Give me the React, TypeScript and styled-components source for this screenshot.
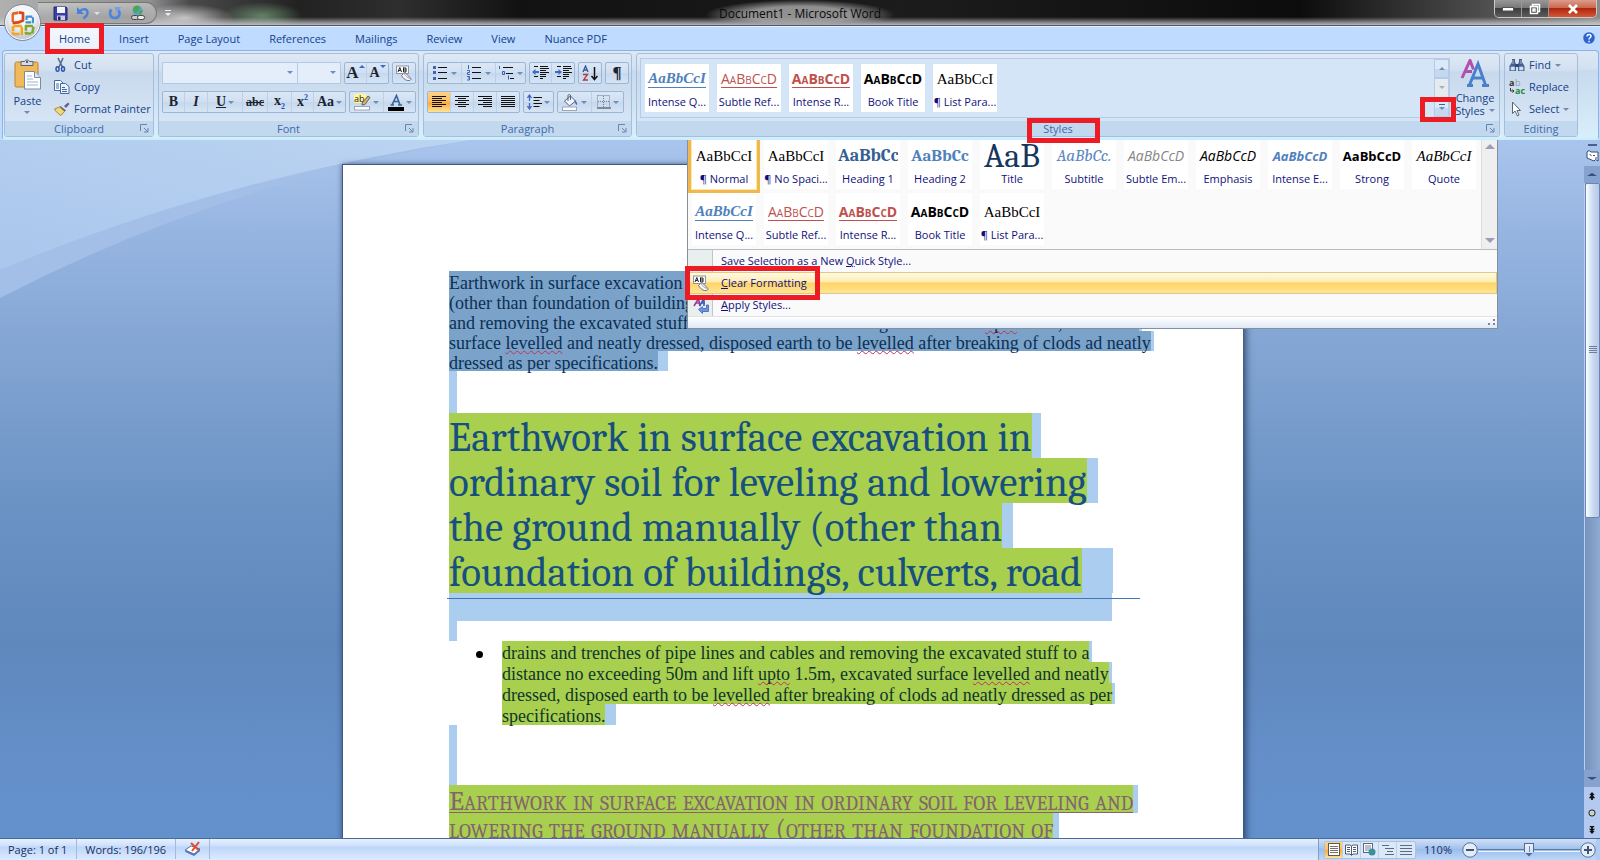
import React from "react";
import styled, { createGlobalStyle, css } from "styled-components";

const UI = `"Open Sans", "Noto Sans", sans-serif`;
const BODY = `"Liberation Serif", "Times New Roman", serif`;
const HEAD = `Caladea, Cambria, "Liberation Serif", serif`;

const Global = createGlobalStyle`
  *, *::before, *::after { box-sizing: border-box; }
  body { margin: 0; font: 11px/16px ${UI}; color: #15428b; }
  button, select, input { font: inherit; color: inherit; margin: 0; padding: 0; }
  button { background: none; border: 0; cursor: pointer; }
  h1, h2, p, ul { margin: 0; padding: 0; font-weight: normal; }
`;

const Window = styled.div`
  display: flex;
  flex-direction: column;
  height: 100vh;
  min-width: 1280px;
  overflow: hidden;
  background: #bfdbff;
`;

/* ---------- title bar ---------- */

const TitleBar = styled.header`
  position: relative;
  display: grid;
  grid-template-columns: 1fr auto 1fr;
  flex: none;
  height: 26px;
  border-bottom: 1px solid #4d5a6b;
  background:
    linear-gradient(180deg, transparent 17px, rgba(210, 210, 210, 0.85) 25px),
    radial-gradient(ellipse 50px 14px at 185px 18px, rgba(225, 225, 225, 0.8), transparent),
    radial-gradient(ellipse 40px 14px at 262px 16px, rgba(120, 165, 125, 0.7), transparent),
    linear-gradient(90deg, #b0b0b0 0, #8f8f8f 150px, #4a4a4a 190px, #222 300px, #2e2e2e 400px, #121212 520px, #1c1c1c 900px, #0c0c0c 1300px, #555 94%, #8a8a8a 100%);
`;

const QuickBar = styled.div`
  display: flex;
  align-items: center;
  align-self: start;
  justify-self: start;
  gap: 8px;
  height: 22px;
  margin: 2px 0 0 38px;
  padding: 0 10px 0 15px;
  border: 1px solid #777;
  border-left: 0;
  border-radius: 0 11px 11px 0;
  background: linear-gradient(180deg, rgba(215, 215, 215, 0.6), rgba(150, 150, 150, 0.5));
`;

const QuickSlot = styled.div`
  display: flex;
  align-items: center;
  gap: 8px;
`;

const IconButton = styled.button`
  display: flex;
  align-items: center;
  justify-content: center;
  gap: 4px;
`;

const QuickMore = styled(IconButton)`
  flex-direction: column;
  gap: 2px;
`;

const Orb = styled.button`
  position: absolute;
  z-index: 5;
  left: 4px;
  top: 4px;
  width: 37px;
  height: 37px;
  display: flex;
  align-items: center;
  justify-content: center;
  border-radius: 50%;
  border: 1px solid #7d8896;
  background: radial-gradient(circle at 50% 30%, #fff 0, #eceff3 45%, #c3c9d2 75%, #eef2f7 100%);
  box-shadow: inset 0 0 0 1px #f7f9fc;
`;

const DocTitle = styled.div`
  padding: 5px 12px 0;
  font-size: 12px;
  line-height: 18px;
  color: #0a0a0a;
  background: radial-gradient(ellipse at 50% 60%, rgba(165, 165, 165, 0.85) 40%, transparent 72%);
`;

const WindowButtons = styled.div`
  display: flex;
  justify-self: end;
  height: 18px;
  margin-right: 3px;
  border: 1px solid #c9c9c9;
  border-top: 0;
  border-radius: 0 0 5px 5px;
  overflow: hidden;
`;

const WindowButton = styled.button<{ $close?: boolean }>`
  display: flex;
  align-items: center;
  justify-content: center;
  width: ${(p) => (p.$close ? 47 : 27)}px;
  border-right: ${(p) => (p.$close ? 0 : 1)}px solid #999;
  background: ${(p) =>
    p.$close
      ? "linear-gradient(180deg, #dd9c8a 0, #c96a52 45%, #b0270d 50%, #d2583a 100%)"
      : "linear-gradient(180deg, #989898 0, #787878 45%, #3c3c3c 50%, #5d5d5d 100%)"};
`;

/* ---------- tabs ---------- */

const Callout = styled.span<{ $inset: string }>`
  position: absolute;
  z-index: 20;
  inset: ${(p) => p.$inset};
  border: 5px solid #ed1c24;
  pointer-events: none;
`;

const TabBar = styled.nav`
  display: flex;
  align-items: stretch;
  flex: none;
  gap: 1px;
  height: 24px;
  padding-left: 45px;
  border-top: 1px solid #e3efff;
`;

const Tab = styled.button<{ $active?: boolean }>`
  position: relative;
  padding: 0 14px;
  color: #15428b;
  ${(p) => p.$active && css`background: linear-gradient(180deg, #f4f8fd, #eaf0fa);`}
`;

const Help = styled(IconButton)`
  margin-left: auto;
  padding: 0 4px 2px 0;
`;

/* ---------- ribbon ---------- */

const Ribbon = styled.section`
  position: relative;
  z-index: 2;
  display: flex;
  flex: none;
  gap: 4px;
  height: 90px;
  margin: 0 1px 0 2px;
  padding: 2px 20px 1px 1px;
  border: 1px solid #8db2e3;
  border-bottom: 2px solid #c8f0fc;
  border-radius: 4px;
  background: linear-gradient(180deg, #dde8f5 0, #d2e0f1 18px, #c8daee 20px, #d9eefb 100%);
`;

const Group = styled.div<{ $width?: number }>`
  position: relative;
  display: flex;
  flex-direction: column;
  ${(p) => (p.$width ? `flex: none; width: ${p.$width}px;` : "flex: 1; min-width: 0;")}
  border: 1px solid #a4bfdd;
  border-radius: 3px;
  background: linear-gradient(180deg, #dfe9f5 0, #d3e0f0 16px, #c8d9ed 18px, #dae9f7 100%);
`;

const GroupBody = styled.div`
  display: flex;
  flex: 1;
  min-height: 0;
`;

const GroupName = styled.div<{ $shift?: boolean }>`
  position: relative;
  display: flex;
  justify-content: center;
  flex: none;
  height: 15px;
  line-height: 16px;
  padding-right: ${(p) => (p.$shift ? 20 : 0)}px;
  color: #3e6aaa;
  background: #c2d8ef;
`;

const Launcher = styled.button`
  position: absolute;
  right: 4px;
  top: 3px;
  display: flex;
`;

const Arrow = styled.i<{ $up?: boolean; $color?: string }>`
  width: 0;
  height: 0;
  border: 3px solid transparent;
  ${(p) =>
    p.$up
      ? css`border-top: 0; border-bottom-color: ${p.$color || "#6f8db5"};`
      : css`border-bottom: 0; border-top-color: ${p.$color || "#6f8db5"};`}
`;

const BigButton = styled.button<{ $width: number }>`
  display: flex;
  flex-direction: column;
  align-items: center;
  flex: none;
  width: ${(p) => p.$width}px;
  padding-top: 5px;
  line-height: 13px;
  gap: 4px;
`;

const BigLabel = styled.span`
  display: flex;
  flex-direction: column;
  align-items: center;
  gap: 4px;
`;

const InlineLabel = styled.span`
  display: flex;
  align-items: center;
  gap: 4px;
`;

const CommandList = styled.div`
  display: flex;
  flex-direction: column;
  padding-left: 4px;
`;

const Command = styled.button`
  display: grid;
  grid-template-columns: 16px auto auto;
  align-items: center;
  justify-content: start;
  column-gap: 4px;
  height: 22px;
  white-space: nowrap;
`;

const ToolRows = styled.div`
  display: flex;
  flex-direction: column;
  gap: 7px;
  padding: 8px 3px 0;
`;

const ToolRow = styled.div`
  display: flex;
  gap: 3px;
`;

const ToolSet = styled.div`
  display: flex;
  height: 22px;
  border: 1px solid #9ab6d8;
  border-radius: 2px;
  background: linear-gradient(180deg, #dbe7f5 0, #cfdff1 50%, #c6d8ed 52%, #d6e5f5 100%);
`;

const Tool = styled.button<{ $w: number; $on?: boolean }>`
  display: flex;
  align-items: center;
  justify-content: center;
  gap: 2px;
  width: ${(p) => p.$w}px;
  border-right: 1px solid #bdd0e8;
  &:last-child { border-right: 0; }
  ${(p) => p.$on && css`background: linear-gradient(180deg, #fbd18b 0, #fcc165 45%, #fba93a 55%, #fde39a 100%);`}
`;

const GrowTool = styled(Tool)`
  align-items: flex-start;
  gap: 0;
  padding-top: 2px;
`;

const Glyph = styled.span<{ $size?: number; $italic?: boolean; $deco?: string }>`
  font: ${(p) => (p.$italic ? "italic" : "normal")} 700 ${(p) => p.$size || 14}px/16px ${BODY};
  text-decoration: ${(p) => p.$deco || "none"};
  color: #1c2430;
  sup, sub { font-size: 8px; line-height: 8px; color: #2a50b8; }
`;

const Combo = styled.label<{ $w: number }>`
  position: relative;
  display: flex;
  width: ${(p) => p.$w}px;
  height: 22px;
  & + & { margin-left: -4px; }
  select {
    appearance: none;
    width: 100%;
    border: 1px solid #b3cae6;
    border-radius: 0;
    background: #e3eefa;
  }
  i { position: absolute; right: 5px; top: 9px; }
`;

/* ---------- style gallery ---------- */

const Gallery = styled.div`
  display: flex;
  flex: 1;
  min-width: 0;
  margin: 4px 1px 3px 3px;
  border: 1px solid #b5cce8;
  background: #d4e5f7;
`;

const GalleryItems = styled.div`
  display: flex;
  flex: 1;
  gap: 8px;
  padding: 5px 4px;
  overflow: hidden;
`;

const StyleTile = styled.button<{ $on?: boolean; $menu?: boolean }>`
  display: flex;
  flex-direction: column;
  align-items: center;
  flex: none;
  width: 64px;
  height: 48px;
  background: #fff;
  line-height: 16px;
  color: #10107c;
  white-space: nowrap;
  ${(p) =>
    p.$menu &&
    css`
      width: 72px;
      height: 56px;
      padding-top: 4px;
      border: solid #fafafa;
      border-width: 0 4px 4px;
    `}
  ${(p) => p.$on && css`border: solid #f0b94e; border-width: 0 3px 3px; box-shadow: inset 0 0 0 1px #fbe6ae;`}
`;

type Look = {
  $font: string;
  $size: number;
  $color: string;
  $bold?: boolean;
  $italic?: boolean;
  $caps?: boolean;
  $line?: boolean;
};

const Preview = styled.span<Look>`
  width: 60px;
  height: 26px;
  margin: 2px 0 2px;
  overflow: hidden;
  display: flex;
  align-items: center;
  font-family: ${(p) => p.$font};
  font-size: ${(p) => p.$size}px;
  color: ${(p) => p.$color};
  font-weight: ${(p) => (p.$bold ? 700 : 400)};
  font-style: ${(p) => (p.$italic ? "italic" : "normal")};
  font-variant: ${(p) => (p.$caps ? "small-caps" : "normal")};
  span { margin: 0 auto; border-bottom: ${(p) => (p.$line ? "1px solid" : "0")}; line-height: ${(p) => (p.$line ? 17 : 20)}px; }
`;

const GallerySteps = styled.div`
  position: relative;
  display: grid;
  grid-template-rows: repeat(3, 1fr);
  width: 15px;
`;

const Step = styled.button<{ $off?: boolean }>`
  display: flex;
  flex-direction: column;
  gap: 2px;
  align-items: center;
  justify-content: center;
  border: 1px solid #b5cce8;
  background: ${(p) => (p.$off ? "#e6ebf1" : "linear-gradient(180deg, #dce9f8 50%, #c4d8ef 52%)")};
`;

const Dash = styled.i<{ $w: number; $color?: string; $thick?: boolean }>`
  width: ${(p) => p.$w}px;
  height: ${(p) => (p.$thick ? 2 : 1)}px;
  background: ${(p) => p.$color || "#45618c"};
`;

const StylesMark = styled.span`
  position: absolute;
  left: calc(50% - 41px);
  top: -3px;
  width: 73px;
  height: 25px;
  z-index: 15;
`;

const StyleMenu = styled.div`
  position: absolute;
  z-index: 10;
  top: 86px;
  left: 50px;
  right: 1px;
  border: 1px solid #868f9c;
  border-top: 0;
  background: #fafafa;
  color: #10107c;
`;

const MenuGallery = styled.div`
  display: flex;
  height: 110px;
  border-bottom: 1px solid #b8bcc4;
  overflow: hidden;
`;

const MenuTiles = styled.div`
  display: grid;
  grid-template-columns: repeat(11, 72px);
  grid-auto-rows: 56px;
  align-content: start;
  flex: 1;
  margin-top: -3px;
`;

const MenuScroll = styled.div`
  display: flex;
  flex-direction: column;
  align-items: center;
  justify-content: space-between;
  width: 16px;
  padding: 4px 0 6px;
  border-left: 1px solid #ddd;
  background: #efefef;
  i { border-left-width: 5px; border-right-width: 5px; }
  i:first-child { border-bottom-width: 5px; }
  i:last-child { border-top-width: 5px; }
`;

const MenuItem = styled.button<{ $hot?: boolean }>`
  position: relative;
  display: flex;
  align-items: center;
  width: 100%;
  height: 22px;
  text-align: left;
  border: 1px solid ${(p) => (p.$hot ? "#dfc883" : "transparent")};
  background: ${(p) =>
    p.$hot
      ? "linear-gradient(180deg, #fffbe9 0, #feecb2 45%, #fed465 50%, #fee69a 100%)"
      : "linear-gradient(90deg, #e9eeee 24px, #c5c5c5 24px, #c5c5c5 25px, #fafafa 25px)"};
  background-origin: border-box;
`;

const MenuMark = styled.span`
  position: absolute;
  left: -4px;
  top: -7px;
  width: 135px;
  height: 34px;
`;

const MenuIcon = styled.span`
  display: flex;
  justify-content: center;
  flex: none;
  width: 24px;
  margin-right: 8px;
`;

const MenuFoot = styled.div`
  display: flex;
  justify-content: flex-end;
  align-items: flex-end;
  height: 12px;
  padding: 0 2px 2px;
  border-top: 1px solid #dfe3e8;
  background: linear-gradient(180deg, #fff, #dfe9f5);
`;

/* ---------- workspace ---------- */

const Workspace = styled.main`
  position: relative;
  display: flex;
  flex: 1;
  min-height: 0;
  background: linear-gradient(180deg, #a9c5ee 0, #98b6e2 12%, #83a5d3 30%, #6b93c4 52%, #5f88bd 72%, #648fc9 90%, #6391cc 100%);
`;

const Swoosh = styled.svg`
  position: absolute;
  left: 0;
  top: 0;
`;

const Desk = styled.div`
  position: relative;
  flex: 1;
  min-width: 0;
  padding: 24px 19px 0 20px;
  overflow: hidden;
`;

const Page = styled.article`
  width: 901px;
  height: 1200px;
  margin: 0 auto;
  padding: 106px 0 0 106px;
  border: 1px solid #45597a;
  border-right-color: #fff;
  background: #fff;
  box-shadow: 3px 2px 7px rgba(25, 45, 80, 0.7), -1px 0 4px rgba(25, 45, 80, 0.3);
`;

const Line = styled.span<{ $h: number }>`
  display: flex;
  height: ${(p) => p.$h}px;
  line-height: ${(p) => p.$h}px;
  white-space: pre;
`;

const Ink = styled.span<{ $bg: string }>`
  padding-top: 2px;
  background: ${(p) => p.$bg};
`;

/* Keeps descenders above the highlight of the following line. */
const InkText = styled.span`
  position: relative;
  z-index: 1;
  u {
    text-decoration: underline wavy #c2305a 1px;
    text-underline-offset: 1px;
    text-decoration-skip-ink: none;
  }
`;

const Tail = styled.span<{ $w: number }>`
  width: ${(p) => p.$w}px;
  background: #aacdf0;
`;

const Blank = styled.div<{ $h: number }>`
  width: 8px;
  height: ${(p) => p.$h}px;
  background: #aacdf0;
`;

const Para = styled.p`
  font: 18px ${BODY};
  color: #0a3056;
`;

const Heading = styled.h1`
  font: 41px ${HEAD};
  color: #17507f;
`;

const HeadingEnd = styled.div`
  width: 663px;
  height: 28px;
  padding-top: 5px;
  background: #aacdf0;
`;

const Rule = styled.hr`
  width: 693px;
  height: 1px;
  margin: 0 0 0 -2px;
  border: 0;
  background: #3f76b5;
`;

const List = styled.ul`
  padding-left: 53px;
  font: 18px ${BODY};
  color: #10352c;
  list-style: none;
  li { position: relative; }
  li::before {
    content: "";
    position: absolute;
    left: -26px;
    top: 10px;
    width: 7px;
    height: 7px;
    border-radius: 50%;
    background: #000;
  }
`;

const CapsHeading = styled.h2`
  font: 28px ${HEAD};
  font-variant: small-caps;
  color: #85636f;
  ${InkText} { text-decoration: underline 1px; text-underline-offset: 2px; text-decoration-skip-ink: none; }
`;

const ScrollBar = styled.aside`
  position: relative;
  display: flex;
  flex-direction: column;
  align-items: center;
  flex: none;
  width: 16px;
`;

const ScrollTop = styled.div`
  display: flex;
  flex-direction: column;
  align-items: center;
  gap: 4px;
  height: 26px;
  padding-top: 4px;
`;

const ScrollButton = styled.button`
  display: flex;
  align-items: center;
  justify-content: center;
  width: 16px;
  height: 17px;
  background: #86a3cf;
  i { border-left-width: 5px; border-right-width: 5px; }
`;

const Track = styled.div`
  flex: 1;
  width: 16px;
  border-left: 1px solid #b9cff0;
  background: linear-gradient(90deg, #7692bd, #8fabd3);
`;

const Thumb = styled.div`
  display: flex;
  align-items: center;
  justify-content: center;
  height: 57%;
  border: 1px solid #6b85b8;
  border-radius: 2px;
  background: linear-gradient(90deg, #fff 0, #dcebf7 30%, #c6d6ee 60%, #b7c8ea 100%);
`;

const Browse = styled.div`
  display: flex;
  flex-direction: column;
  width: 16px;
  height: 51px;
  background: #b4c9ef;
`;

const BrowseButton = styled(IconButton)`
  flex: 1;
`;

/* ---------- status bar ---------- */

const StatusBar = styled.footer`
  display: flex;
  align-items: stretch;
  flex: none;
  height: 22px;
  padding-right: 4px;
  border-top: 1px solid #4a6a9e;
  line-height: 19px;
  color: #15305f;
  background: linear-gradient(180deg, #e6f1ff 0, #cfe1fb 30%, #bfd6f9 40%, #dcebff 100%);
`;

const StatusItem = styled.button<{ $tight?: boolean }>`
  display: flex;
  align-items: center;
  height: 20px;
  padding: 0 ${(p) => (p.$tight ? 8 : 9)}px 0 8px;
  border-right: 1px solid #9dbbe3;
`;

const StatusRight = styled.div`
  display: flex;
  align-items: center;
  gap: 4px;
  margin-left: auto;
  padding-left: 5px;
  border-left: 1px solid #7d9fd0;
  background: linear-gradient(180deg, #cfe0f8 0, #a9c6ee 40%, #9dbde9 50%, #bdd7f8 100%);
  box-shadow: 4px 0 0 #b0cbf0;
`;

const Views = styled.div`
  display: flex;
  height: 18px;
  margin-right: 4px;
  border: 1px solid #a9c1e2;
  border-radius: 2px;
  background: #dbe8f8;
`;

const View = styled(Tool)`
  height: 16px;
`;

const ZoomButton = styled(IconButton)`
  margin-left: 6px;
`;

const Zoom = styled.input`
  appearance: none;
  width: 102px;
  height: 16px;
  margin: 0 -4px;
  background: linear-gradient(#5c7cab, #5c7cab) center / 100% 1px no-repeat, linear-gradient(#eaf3ff, #eaf3ff) 0 9px / 100% 1px no-repeat;
  &::-webkit-slider-thumb {
    appearance: none;
    width: 10px;
    height: 14px;
    background:
      linear-gradient(#7189ab, #7189ab) 5px 3px / 1px 6px no-repeat,
      linear-gradient(#eaf2fc, #d3e2f5) 1px 1px / 8px 9px no-repeat,
      #4f6c96;
    clip-path: polygon(0 0, 100% 0, 100% 65%, 50% 100%, 0 65%);
  }
`;

/* ---------- icons ---------- */

const OfficeLogo = () => (
  <svg width="28" height="28" viewBox="0 0 24 24" fill="none" strokeLinejoin="round">
    <path d="M8 2 3.200 2.800 2.200 4v7l2 .6V5l4-.6z" fill="#e8641b" />
    <path d="M8.500 2.800l3.500.7v6.300L8 11.500l-5 .5" stroke="#d9481c" strokeWidth="2.400" />
    <path d="M15 6.500h5.500v5H15z" stroke="#3c8fd0" strokeWidth="1.800" strokeDasharray="5 1" />
    <path d="M4 14.500h7v7H3.500v-7" stroke="#f2a51f" strokeWidth="2.200" strokeDasharray="7 1" />
    <path d="M14.500 14.500H21l-1 6.500h-5.500z" stroke="#7fa92b" strokeWidth="2.200" strokeDasharray="6 1" />
  </svg>
);

const Save = () => (
  <svg width="15" height="15" viewBox="0 0 15 15">
    <path d="M1 1h12l1 1v12H1z" fill="#3b3fa8" stroke="#23276f" />
    <path d="M4 1h8v6H4z" fill="#f3f5fb" />
    <path d="M4 9.500h8V14H4z" fill="#c8cde8" />
    <path d="M5 10.500h2.500V14H5z" fill="#1e2264" />
  </svg>
);

const Undo = () => (
  <svg width="14" height="14" viewBox="0 0 14 14" fill="none">
    <path d="M3.500 5.500C7 1.500 12 3 11.500 7c-.2 2.200-1.700 4-4 5.500" stroke="#4b82d8" strokeWidth="2.400" />
    <path d="M1 1v7h7z" fill="#4b82d8" />
  </svg>
);

const Redo = () => (
  <svg width="14" height="14" viewBox="0 0 14 14" fill="none">
    <path d="M3.500 3.500C1 6 1.500 11.500 6.500 12c5 .3 6.500-5 3.500-8" stroke="#4a86dd" strokeWidth="2.600" />
    <path d="M6.500 1H13L9 7z" fill="#6ea2ea" />
  </svg>
);

const Globe = () => (
  <svg width="16" height="16" viewBox="0 0 16 16">
    <circle cx="7.500" cy="5.500" r="5" fill="#57a8c8" />
    <path d="M3 3c2-3 6-3 7 0-1 3-3 2-3 5-3 0-4-2-4-5zM9 6l3.500-1c0 3-1 4-3 5z" fill="#4aa554" />
    <rect x="1.500" y="10.500" width="7" height="4" rx="2" fill="#ccc" stroke="#444" />
    <rect x="7.500" y="10.500" width="7" height="4" rx="2" fill="#eee" stroke="#444" />
  </svg>
);

const PasteIcon = () => (
  <svg width="28" height="31" viewBox="0 0 28 31">
    <rect x="1" y="3" width="23" height="25" rx="1.500" fill="#f0b95a" stroke="#b98430" />
    <path d="M7 2.500h3.500C11 .5 15 .5 15.500 2.500H19v4H7z" fill="#d9dde3" stroke="#596273" />
    <circle cx="13" cy="3" r="1" fill="#333" />
    <path d="M10.500 12.500h10l6 6v11.500h-16z" fill="#fff" stroke="#7a8ba8" />
    <path d="M20.500 12.500v6h6" fill="#dbe5f3" stroke="#7a8ba8" />
    <path d="M13 17h5M13 20h6M13 23h11M13 26h11" stroke="#9fb2cf" />
  </svg>
);

const Cut = () => (
  <svg width="16" height="16" viewBox="0 0 16 16" fill="none">
    <path d="M4 1l4.500 9M9 1L5 10" stroke="#5a6c8c" strokeWidth="1.600" />
    <ellipse cx="3.500" cy="12" rx="1.500" ry="2.300" stroke="#2e55a8" strokeWidth="1.500" />
    <ellipse cx="9" cy="12" rx="1.500" ry="2.300" stroke="#2e55a8" strokeWidth="1.500" />
  </svg>
);

const Copy = () => (
  <svg width="16" height="14" viewBox="0 0 16 14">
    <path d="M.5.5h6l3 3v7h-9z" fill="#fff" stroke="#4668a6" />
    <path d="M6.500 3.500h5l3.500 3v7H6.500z" fill="#eaf2fc" stroke="#4668a6" />
    <path d="M2 4h3M2 6h3M2 8h3M8 7.500h3M8 9.500h5M8 11.500h5" stroke="#4668a6" />
  </svg>
);

const Painter = () => (
  <svg width="16" height="14" viewBox="0 0 16 14">
    <path d="M10 4l4-3.500L15.500 2 12 6z" fill="#6b5a9a" />
    <path d="M6.500 4l5.500 4.500-1.500 1L5.500 5.500z" fill="#5b6270" />
    <path d="M.5 7l5-2 5 4.500L7 13.500C4.500 12 2 10 .5 7z" fill="#f0d878" stroke="#a88a3a" />
  </svg>
);

const Eraser = () => (
  <svg width="16" height="16" viewBox="0 0 16 16">
    <rect x=".5" y="1" width="12" height="7.500" fill="#fff" stroke="#8c95a6" />
    <path d="M2 7l1.800-4.500L5.500 7M2.700 5.500h2M7.500 2.500V7M7.500 3h2.500v4H7.500M7.500 5H10" fill="none" stroke="#222" />
    <path d="M5.500 10.500l2-2c1-1 2-.5 3 .5l4 4c1 1 .5 2-1 2.500h-2c-2 0-5-3-6-5z" fill="#f4f5f9" stroke="#6d7385" />
    <path d="M8 8.500c1.500 2.500 3 4 6 5" fill="none" stroke="#a0a6b5" />
  </svg>
);

const Highlighter = () => (
  <svg width="17" height="17" viewBox="0 0 17 17">
    <path d="M0 0h12v9H0z" fill="#fff69b" />
    <text x="0" y="8" fontFamily="Open Sans" fontSize="9" fill="#222">ab</text>
    <path d="M8 9l6-7 2 1.500-5 7-3 .5z" fill="#d8b35c" stroke="#5d6275" />
    <rect x=".5" y="12.500" width="15" height="3.500" fill="#fff" stroke="#9aa6b8" />
  </svg>
);

const FontColor = () => (
  <svg width="16" height="17" viewBox="0 0 16 17">
    <path d="M4 11L8.500 1.500 12 11M5.500 7.500h5M2.500 11h3.500M10 11h4" fill="none" stroke="#39639c" strokeWidth="1.600" />
    <rect y="13" width="16" height="4" fill="#000" />
  </svg>
);

const Lines = ({ widths, anchor = "left" }: { widths: number[]; anchor?: "left" | "mid" | "right" }) => (
  <svg width="14" height="12" viewBox="0 0 14 12">
    {widths.map((w, i) => (
      <rect key={i} x={anchor === "left" ? 0 : anchor === "mid" ? (14 - w) / 2 : 14 - w} y={i * 2} width={w} height="1" fill="#111" />
    ))}
  </svg>
);

const ListIcon = ({ kind }: { kind: "dot" | "num" | "multi" }) => (
  <svg width="17" height="16" viewBox="0 0 17 16" fill="none">
    {kind === "multi" ? (
      <>
        <path d="M5 2.500h10M8 8.500h7M12 13.500h4" stroke="#111" />
        <path d="M1.500 1v3M4.500 6.500h2v3h-2zM10.500 10.500v4" stroke="#3b5fb0" />
      </>
    ) : (
      <>
        <path d="M6 2.500h9M6 7.500h9M6 13.500h9" stroke="#111" />
        {kind === "dot" ? (
          <path d="M1 1h3v3H1zM1 6h3v3H1zM1 12h3v3H1z" fill="#4363b3" />
        ) : (
          <path d="M2.500 0v4M1 5.500h2.500v2H1.500v2H4M1 11.500h2.500V15H1M2 13h2" stroke="#4363b3" />
        )}
      </>
    )}
  </svg>
);

const Indent = ({ out }: { out?: boolean }) => (
  <svg width="17" height="14" viewBox="0 0 17 14">
    <path d="M2 1h4M8 1h8M8 3h9M8 5h6M8 7h9M8 9h6M2 11h4M8 11h6M8 13h3" stroke="#111" transform="translate(0 -.5)" />
    <path d={out ? "M0 6l3.500-3v2H7v2H3.500v2z" : "M7 6L3.500 3v2H0v2h3.500v2z"} fill="#3f68c4" />
  </svg>
);

const Sort = () => (
  <svg width="16" height="16" viewBox="0 0 16 16" fill="none">
    <path d="M1 7l2.500-6L6 7M2 5h3" stroke="#35589a" strokeWidth="1.300" />
    <path d="M1 9.500h4.500L1.500 15H6" stroke="#a93c3c" strokeWidth="1.300" />
    <path d="M12.500 2v12M9.500 11l3 3.500 3-3.500" stroke="#111" strokeWidth="1.500" />
  </svg>
);

const Spacing = () => (
  <svg width="15" height="16" viewBox="0 0 15 16" fill="none">
    <path d="M2.500 2v5M2.500 9v5M.5 4l2-3 2 3M.5 12l2 3 2-3" stroke="#3f68c4" strokeWidth="1.300" />
    <path d="M6.500 3.500H15M6.500 6.500h6M6.500 9.500H15M6.500 12.500h6" stroke="#111" />
  </svg>
);

const Bucket = () => (
  <svg width="17" height="17" viewBox="0 0 17 17">
    <path d="M2.500 7l6-5 5 5-6 5z" fill="#f3f6fb" stroke="#4f617e" />
    <path d="M6 7V1.500C6.500 0 8.500 0 8.500 2v4" fill="none" stroke="#4f617e" />
    <path d="M12.500 6c2 1 3 3 2.500 5-1.500-.5-2-2-2.500-5z" fill="#3f68c4" />
    <rect x=".5" y="13" width="14" height="3.500" fill="#fff" stroke="#9aa6b8" />
  </svg>
);

const Borders = () => (
  <svg width="14" height="14" viewBox="0 0 14 14" fill="none">
    <path d="M.5.5h12v12M.5.5v12M6.500 1v11M1 6.500h12" stroke="#6f7f99" strokeDasharray="1 1" />
    <path d="M0 13h14" stroke="#333" />
  </svg>
);

const ChangeStyles = () => (
  <svg width="30" height="28" viewBox="0 0 30 28" fill="none" strokeWidth="3">
    <path d="M2 19L10 1.500l3.500 9M5 12.500h7" stroke="#b04fae" />
    <path d="M9.500 26L18 5l7.500 21M12 19h11M7 26.500h6M22 26.500h7" stroke="#4a80cb" />
  </svg>
);

const Binoculars = () => (
  <svg width="16" height="14" viewBox="0 0 16 14">
    <path d="M3 1h3v3l1 2v7H.5V8L3 4zM10 1h3v3l2.500 4v5H9V6l1-2z" fill="#44618f" />
    <path d="M2 9h3.500v3H2zM10.500 9H14v3h-3.500zM4 2v4M12 2v4" fill="#d7e4f5" stroke="#b9cbe6" strokeWidth=".8" />
    <path d="M6.500 6h3v3h-3z" fill="#2b4473" />
  </svg>
);

const ReplaceIcon = () => (
  <svg width="16" height="16" viewBox="0 0 16 16" fontFamily="Open Sans" fontSize="9">
    <text x="0" y="7" fontWeight="700" fill="#333">a</text>
    <text x="6" y="7" fill="#999">b</text>
    <text x="6" y="15" fontWeight="700" fill="#1f8a35">ac</text>
    <path d="M1.500 9v3H5M3.500 10.500L5 12l-1.500 1.500" fill="none" stroke="#333" />
  </svg>
);

const Pointer = () => (
  <svg width="14" height="16" viewBox="0 0 14 16">
    <path d="M3.500 1v11.500L6 10l2.500 5 1.500-1-2-4.500h3.500z" fill="#fff" stroke="#57647c" />
  </svg>
);

const ApplyIcon = () => (
  <svg width="17" height="17" viewBox="0 0 17 17" fill="none">
    <path d="M1 9L5.500 1.500 7 9M3 6h4" stroke="#a03c9c" strokeWidth="1.600" />
    <path d="M6.500 9L11 1.500V9M8 6h4" stroke="#3a5db5" strokeWidth="1.600" />
    <path d="M5.500 12.500l4-3v2h4V8h2v6.500h-6v2z" fill="#6d93e3" stroke="#3f62b5" strokeWidth=".8" />
  </svg>
);

const LaunchIcon = () => (
  <svg width="9" height="9" viewBox="0 0 9 9" fill="none" stroke="#6685ad">
    <path d="M.5 7V.5H7M4 4l3.500 3.500M8 4v4H4" />
  </svg>
);

const RulerIcon = () => (
  <svg width="13" height="12" viewBox="0 0 13 12">
    <path d="M1 2l2-1.500 2 1.500h7v9L9.500 9.500 8 11 1 8z" fill="#fff" stroke="#3a4c6e" />
    <path d="M3.500 4l2 2M7 5.500h2M9 8h2" stroke="#3a4c6e" />
  </svg>
);

const Proof = () => (
  <svg width="17" height="16" viewBox="0 0 17 16">
    <path d="M1 9l6-4 9 3-6 5z" fill="#fff" stroke="#54719f" />
    <path d="M1 9l.5 2 8.500 4 6-5V8l-6 5z" fill="#4e77bd" />
    <path d="M7 2l7.500 7M15 1L8 10" stroke="#e4492c" strokeWidth="2" />
  </svg>
);

const PageView = () => (
  <svg width="12" height="13" viewBox="0 0 12 13">
    <rect x=".5" y=".5" width="11" height="12" fill="#fff" stroke="#5c5a50" />
    <path d="M2 3.500h8M2 5.500h8M2 7.500h8M2 9.500h8" stroke="#77756a" />
  </svg>
);

const BookView = () => (
  <svg width="13" height="12" viewBox="0 0 13 12">
    <path d="M.5 1h4.500l1.500 1L8 1h4.500v9H8l-1.500 1.500L5 10H.5z" fill="#fff" stroke="#4c5a72" />
    <path d="M6.500 2v9M2 3.500h3M2 5.500h3M2 7.500h3M8 3.500h3M8 5.500h3M8 7.500h3" stroke="#4c5a72" />
  </svg>
);

const WebView = () => (
  <svg width="13" height="13" viewBox="0 0 13 13">
    <rect x=".5" y=".5" width="9" height="9" fill="#fff" stroke="#5b6a84" />
    <path d="M2 3h6M2 5h6M2 7h4" stroke="#77839a" />
    <circle cx="9" cy="9" r="3.500" fill="#3c8f9c" />
  </svg>
);

const OutlineView = ({ draft }: { draft?: boolean }) => (
  <svg width="12" height="12" viewBox="0 0 12 12">
    <path d={draft ? "M0 1.500h12M0 4.500h12M0 7.500h12M0 10.500h12" : "M0 1.500h7M3 4.500h9M5 7.500h6M3 10.500h9"} stroke="#5d6b82" />
  </svg>
);

const ZoomStep = ({ plus }: { plus?: boolean }) => (
  <svg width="16" height="16" viewBox="0 0 16 16">
    <circle cx="8" cy="8" r="7.200" fill="#e3edfa" stroke="#5b7299" />
    <path d={plus ? "M4 8h8M8 4v8" : "M4 8h8"} stroke="#43546f" strokeWidth="2" />
  </svg>
);

const HelpIcon = () => (
  <svg width="14" height="14" viewBox="0 0 14 14">
    <circle cx="7" cy="7" r="6.300" fill="#2b63cf" stroke="#dce9fb" />
    <path d="M5 5.500c0-3 4-2.500 4-.3C9 6.800 7 6.700 7 8.500M7 9.800v1.500" stroke="#fff" strokeWidth="1.500" fill="none" />
  </svg>
);

const BrowseIcon = ({ kind }: { kind: "prev" | "pick" | "next" }) => (
  <svg width="8" height="8" viewBox="0 0 9 9">
    {kind === "pick" ? (
      <circle cx="4.500" cy="4.500" r="3.500" fill="#c9d0c4" stroke="#111" />
    ) : (
      <path d={kind === "prev" ? "M4.500 0L7.500 3.500H5.500L8 7H5.500v2h-2V7H1l2.500-3.500h-2z" : "M2 0h5v1.500H5.500V3H8L5.500 5.500h2L4.500 9 1.500 5.500h2L1 3h2.500V1.500H2z"} fill="#111" />
    )}
  </svg>
);

/* ---------- data ---------- */

type StyleDef = { name: string; sample: string; look: Look };

const serif: Look = { $font: BODY, $size: 15, $color: "#000" };
const sans: Look = { $font: UI, $size: 14, $color: "#000" };
const sansBold: Look = { $font: UI, $size: 13, $color: "#000", $bold: true };

const BASE_STYLES: StyleDef[] = [
  { name: "¶ Normal", sample: "AaBbCcI", look: serif },
  { name: "¶ No Spaci...", sample: "AaBbCcI", look: serif },
  { name: "Heading 1", sample: "AaBbCc", look: { $font: HEAD, $size: 18, $color: "#365f91", $bold: true } },
  { name: "Heading 2", sample: "AaBbCc", look: { $font: HEAD, $size: 17, $color: "#4f81bd", $bold: true } },
  { name: "Title", sample: "AaB", look: { $font: HEAD, $size: 34, $color: "#17365d" } },
  { name: "Subtitle", sample: "AaBbCc.", look: { $font: HEAD, $size: 17, $color: "#5b88c0", $italic: true } },
  { name: "Subtle Em...", sample: "AaBbCcD", look: { ...sans, $color: "#868686", $italic: true } },
  { name: "Emphasis", sample: "AaBbCcD", look: { ...sans, $italic: true } },
  { name: "Intense E...", sample: "AaBbCcD", look: { ...sansBold, $color: "#4f81bd", $italic: true } },
  { name: "Strong", sample: "AaBbCcD", look: sansBold },
  { name: "Quote", sample: "AaBbCcI", look: { ...serif, $italic: true } },
];

const RECENT_STYLES: StyleDef[] = [
  { name: "Intense Q...", sample: "AaBbCcI", look: { ...serif, $color: "#4f81bd", $bold: true, $italic: true, $line: true } },
  { name: "Subtle Ref...", sample: "AaBbCcD", look: { ...sans, $color: "#c0504d", $caps: true, $line: true } },
  { name: "Intense R...", sample: "AaBbCcD", look: { ...sans, $color: "#c0504d", $caps: true, $bold: true, $line: true } },
  { name: "Book Title", sample: "AaBbCcD", look: { ...sans, $caps: true, $bold: true } },
  { name: "¶ List Para...", sample: "AaBbCcI", look: serif },
];

const TABS = ["Home", "Insert", "Page Layout", "References", "Mailings", "Review", "View", "Nuance PDF"];

const BLUE = "#7ba2c8";
const GREEN = "#a8cf4e";

const bad = (s: string) => <u>{s}</u>;

const BODY_LINES: [React.ReactNode, number][] = [
  ["Earthwork in surface excavation in ordinary soil for leveling and lowering the ground manually", 3],
  ["(other than foundation of buildings, culverts, road, drains and trenches of pipe lines and cables", 3],
  [<>and removing the excavated stuff to a distance not exceeding 50m and lift {bad("upto")} 1.5m, excavated</>, 3],
  [<>surface {bad("levelled")} and neatly dressed, disposed earth to be {bad("levelled")} after breaking of clods ad neatly</>, 3],
  ["dressed as per specifications.", 10],
];

const HEADING_LINES: [string, number][] = [
  ["Earthwork in surface excavation in", 9],
  ["ordinary soil for leveling and lowering", 11],
  ["the ground manually (other than", 11],
  ["foundation of buildings, culverts, road", 31],
];

const LIST_LINES: [React.ReactNode, number][] = [
  ["drains and trenches of pipe lines and cables and removing the excavated stuff to a", 3],
  [<>distance no exceeding 50m and lift {bad("upto")} 1.5m, excavated surface {bad("levelled")} and neatly</>, 3],
  [<>dressed, disposed earth to be {bad("levelled")} after breaking of clods ad neatly dressed as per</>, 3],
  ["specifications.", 11],
];

const CAPS_LINES: [string, number][] = [
  ["Earthwork in surface excavation in ordinary soil for leveling and", 5],
  ["lowering the ground manually (other than foundation of", 6],
];

/* ---------- parts ---------- */

const Tile = ({ def, menu, on }: { def: StyleDef; menu?: boolean; on?: boolean }) => (
  <StyleTile $menu={menu} $on={on}>
    <Preview {...def.look}>
      <span>{def.sample}</span>
    </Preview>
    {def.name}
  </StyleTile>
);

const Lined = ({ lines, h, bg }: { lines: [React.ReactNode, number][]; h: number; bg: string }) => (
  <>
    {lines.map(([text, tail], i) => (
      <Line key={i} $h={h}>
        <Ink $bg={bg}><InkText>{text}</InkText></Ink>
        <Tail $w={tail} />
      </Line>
    ))}
  </>
);

const Caption = ({ children }: { children: React.ReactNode }) => (
  <GroupName>
    {children}
    <Launcher aria-label={`${children} options`}><LaunchIcon /></Launcher>
  </GroupName>
);

export default function App() {
  return (
    <Window>
      <Global />
      <TitleBar>
        <Orb aria-label="Office menu"><OfficeLogo /></Orb>
        <QuickSlot>
          <QuickBar>
            <IconButton aria-label="Save"><Save /></IconButton>
            <IconButton aria-label="Undo"><Undo /><Arrow $color="#d8e2f2" /></IconButton>
            <IconButton aria-label="Redo"><Redo /></IconButton>
            <IconButton aria-label="Web preview"><Globe /></IconButton>
          </QuickBar>
          <QuickMore aria-label="Customize quick access">
            <Dash $w={6} $color="#e8eefa" />
            <Arrow $color="#e8eefa" />
          </QuickMore>
        </QuickSlot>
        <DocTitle>Document1 - Microsoft Word</DocTitle>
        <WindowButtons>
          <WindowButton aria-label="Minimize">
            <svg width="12" height="6"><rect x=".5" y="1.500" width="11" height="3.500" fill="#fff" stroke="#555" /></svg>
          </WindowButton>
          <WindowButton aria-label="Restore">
            <svg width="12" height="12" fill="none" stroke="#fff" strokeWidth="1.500"><path d="M3.500 3V1.500h7v7H9M1.500 3.500h7v7h-7zM4 6h2v2H4z" /></svg>
          </WindowButton>
          <WindowButton $close aria-label="Close">
            <svg width="12" height="10"><path d="M2 1l8 8M10 1L2 9" stroke="#fff" strokeWidth="2.600" /></svg>
          </WindowButton>
        </WindowButtons>
      </TitleBar>

      <TabBar>
        {TABS.map((t, i) => (
          <Tab key={t} $active={i === 0}>
            {t}
            {i === 0 && <Callout $inset="-4px 0 -4px 0" />}
          </Tab>
        ))}
        <Help aria-label="Help"><HelpIcon /></Help>
      </TabBar>

      <Ribbon>
        <Group $width={150}>
          <GroupBody>
            <BigButton $width={45}>
              <PasteIcon />
              <BigLabel>Paste<Arrow /></BigLabel>
            </BigButton>
            <CommandList>
              <Command><Cut />Cut</Command>
              <Command><Copy />Copy</Command>
              <Command><Painter />Format Painter</Command>
            </CommandList>
          </GroupBody>
          <Caption>Clipboard</Caption>
        </Group>

        <Group $width={261}>
          <GroupBody>
            <ToolRows>
              <ToolRow>
                <Combo $w={136}><select aria-label="Font" /><Arrow /></Combo>
                <Combo $w={44}><select aria-label="Font size" /><Arrow /></Combo>
                <ToolSet>
                  <GrowTool $w={22} aria-label="Grow font"><Glyph $size={17}>A</Glyph><Arrow $up $color="#3f68c4" /></GrowTool>
                  <GrowTool $w={21} aria-label="Shrink font"><Glyph $size={14}>A</Glyph><Arrow $color="#3f68c4" /></GrowTool>
                </ToolSet>
                <ToolSet><Tool $w={22} aria-label="Clear formatting"><Eraser /></Tool></ToolSet>
              </ToolRow>
              <ToolRow>
                <ToolSet>
                  <Tool $w={22}><Glyph>B</Glyph></Tool>
                  <Tool $w={23}><Glyph $italic>I</Glyph></Tool>
                  <Tool $w={35}><Glyph $deco="underline">U</Glyph><Arrow /></Tool>
                  <Tool $w={25}><Glyph $size={12} $deco="line-through">abc</Glyph></Tool>
                  <Tool $w={24}><Glyph>x<sub>2</sub></Glyph></Tool>
                  <Tool $w={22}><Glyph>x<sup>2</sup></Glyph></Tool>
                  <Tool $w={31}><Glyph>Aa</Glyph><Arrow /></Tool>
                </ToolSet>
                <ToolSet>
                  <Tool $w={34} aria-label="Highlight"><Highlighter /><Arrow /></Tool>
                  <Tool $w={31} aria-label="Font color"><FontColor /><Arrow /></Tool>
                </ToolSet>
              </ToolRow>
            </ToolRows>
          </GroupBody>
          <Caption>Font</Caption>
        </Group>

        <Group $width={209}>
          <GroupBody>
            <ToolRows>
              <ToolRow>
                <ToolSet>
                  <Tool $w={34} aria-label="Bullets"><ListIcon kind="dot" /><Arrow /></Tool>
                  <Tool $w={34} aria-label="Numbering"><ListIcon kind="num" /><Arrow /></Tool>
                  <Tool $w={29} aria-label="Multilevel list"><ListIcon kind="multi" /><Arrow /></Tool>
                </ToolSet>
                <ToolSet>
                  <Tool $w={22} aria-label="Decrease indent"><Indent out /></Tool>
                  <Tool $w={22} aria-label="Increase indent"><Indent /></Tool>
                </ToolSet>
                <ToolSet><Tool $w={22} aria-label="Sort"><Sort /></Tool></ToolSet>
                <ToolSet><Tool $w={22} aria-label="Show marks"><Glyph $size={17}>¶</Glyph></Tool></ToolSet>
              </ToolRow>
              <ToolRow>
                <ToolSet>
                  <Tool $w={23} $on aria-label="Align left"><Lines widths={[14, 10, 14, 10, 14, 10]} /></Tool>
                  <Tool $w={23} aria-label="Center"><Lines widths={[14, 8, 14, 8, 14, 8]} anchor="mid" /></Tool>
                  <Tool $w={23} aria-label="Align right"><Lines widths={[14, 9, 14, 9, 14, 9]} anchor="right" /></Tool>
                  <Tool $w={22} aria-label="Justify"><Lines widths={[14, 14, 14, 14, 14, 14]} /></Tool>
                </ToolSet>
                <ToolSet><Tool $w={29} aria-label="Line spacing"><Spacing /><Arrow /></Tool></ToolSet>
                <ToolSet>
                  <Tool $w={34} aria-label="Shading"><Bucket /><Arrow /></Tool>
                  <Tool $w={31} aria-label="Borders"><Borders /><Arrow /></Tool>
                </ToolSet>
              </ToolRow>
            </ToolRows>
          </GroupBody>
          <Caption>Paragraph</Caption>
        </Group>

        <Group>
          <GroupBody>
            <Gallery>
              <GalleryItems>
                {RECENT_STYLES.map((s) => <Tile key={s.name} def={s} />)}
              </GalleryItems>
              <GallerySteps>
                <Step aria-label="Scroll up"><Arrow $up /></Step>
                <Step $off aria-label="Scroll down"><Arrow $color="#a7b0bc" /></Step>
                <Step aria-label="More styles"><Dash $w={6} /><Arrow /></Step>
                <Callout $inset="38px -7px -5px -14px" />
              </GallerySteps>
            </Gallery>
            <BigButton $width={48}>
              <ChangeStyles />
              <span>
                Change
                <InlineLabel>Styles<Arrow /></InlineLabel>
              </span>
            </BigButton>
          </GroupBody>
          <GroupName $shift>
            Styles
            <Launcher aria-label="Styles options"><LaunchIcon /></Launcher>
            <StylesMark><Callout $inset="0" /></StylesMark>
          </GroupName>

          <StyleMenu>
            <MenuGallery>
              <MenuTiles>
                {BASE_STYLES.map((s, i) => <Tile key={s.name} def={s} menu on={i === 0} />)}
                {RECENT_STYLES.map((s) => <Tile key={s.name} def={s} menu />)}
              </MenuTiles>
              <MenuScroll>
                <Arrow $up $color="#9c9cb8" />
                <Arrow $color="#9c9cb8" />
              </MenuScroll>
            </MenuGallery>
            <MenuItem><MenuIcon /><span>Save Selection as a New <u>Q</u>uick Style...</span></MenuItem>
            <MenuItem $hot>
              <MenuIcon><Eraser /></MenuIcon><span><u>C</u>lear Formatting</span>
              <MenuMark><Callout $inset="0" /></MenuMark>
            </MenuItem>
            <MenuItem><MenuIcon><ApplyIcon /></MenuIcon><span><u>A</u>pply Styles...</span></MenuItem>
            <MenuFoot>
              <svg width="7" height="7" fill="#7c8899"><path d="M5 0h2v2H5zM0 4h2v2H0zM5 4h2v2H5z" /></svg>
            </MenuFoot>
          </StyleMenu>
        </Group>

        <Group $width={74}>
          <GroupBody>
            <CommandList>
              <Command><Binoculars />Find<Arrow /></Command>
              <Command><ReplaceIcon />Replace</Command>
              <Command><Pointer />Select<Arrow /></Command>
            </CommandList>
          </GroupBody>
          <GroupName>Editing</GroupName>
        </Group>
      </Ribbon>

      <Workspace>
        <Swoosh width="480" height="160" viewBox="0 0 480 160">
          <defs>
            <linearGradient id="sheen" x1="0" y1="1" x2="1" y2="0">
              <stop offset="0" stopColor="#a9c6ec" />
              <stop offset="1" stopColor="#bcd4f2" />
            </linearGradient>
          </defs>
          <path d="M0 0H470Q220 44 0 158z" fill="#a3bfe7" />
          <path d="M0 0H470Q220 38 0 130z" fill="url(#sheen)" />
        </Swoosh>
        <Desk>
          <Page>
            <Para><Lined lines={BODY_LINES} h={20} bg={BLUE} /></Para>
            <Blank $h={42} />
            <Heading><Lined lines={HEADING_LINES} h={45} bg={GREEN} /></Heading>
            <HeadingEnd><Rule /></HeadingEnd>
            <Blank $h={20} />
            <List><li><Lined lines={LIST_LINES} h={21} bg={GREEN} /></li></List>
            <Blank $h={60} />
            <CapsHeading><Lined lines={CAPS_LINES} h={28} bg={GREEN} /></CapsHeading>
          </Page>
        </Desk>
        <ScrollBar>
          <ScrollTop><Dash $w={9} $thick /><RulerIcon /></ScrollTop>
          <ScrollButton aria-label="Scroll up"><Arrow $up $color="#33507f" /></ScrollButton>
          <Track>
            <Thumb><svg width="8" height="8"><path d="M0 .5h8M0 2.500h8M0 4.500h8M0 6.500h8" stroke="#6d7f9f" /></svg></Thumb>
          </Track>
          <ScrollButton aria-label="Scroll down"><Arrow $color="#33507f" /></ScrollButton>
          <Browse>
            <BrowseButton aria-label="Previous page"><BrowseIcon kind="prev" /></BrowseButton>
            <BrowseButton aria-label="Browse object"><BrowseIcon kind="pick" /></BrowseButton>
            <BrowseButton aria-label="Next page"><BrowseIcon kind="next" /></BrowseButton>
          </Browse>
        </ScrollBar>
      </Workspace>

      <StatusBar>
        <StatusItem>Page: 1 of 1</StatusItem>
        <StatusItem>Words: 196/196</StatusItem>
        <StatusItem $tight aria-label="Proofing"><Proof /></StatusItem>
        <StatusRight>
          <Views>
            <View $w={18} $on aria-label="Print layout"><PageView /></View>
            <View $w={18} aria-label="Full screen reading"><BookView /></View>
            <View $w={18} aria-label="Web layout"><WebView /></View>
            <View $w={18} aria-label="Outline"><OutlineView /></View>
            <View $w={18} aria-label="Draft"><OutlineView draft /></View>
          </Views>
          <button>110%</button>
          <ZoomButton aria-label="Zoom out"><ZoomStep /></ZoomButton>
          <Zoom type="range" aria-label="Zoom" min={0} max={100} defaultValue={50} />
          <IconButton aria-label="Zoom in"><ZoomStep plus /></IconButton>
        </StatusRight>
      </StatusBar>
    </Window>
  );
}
